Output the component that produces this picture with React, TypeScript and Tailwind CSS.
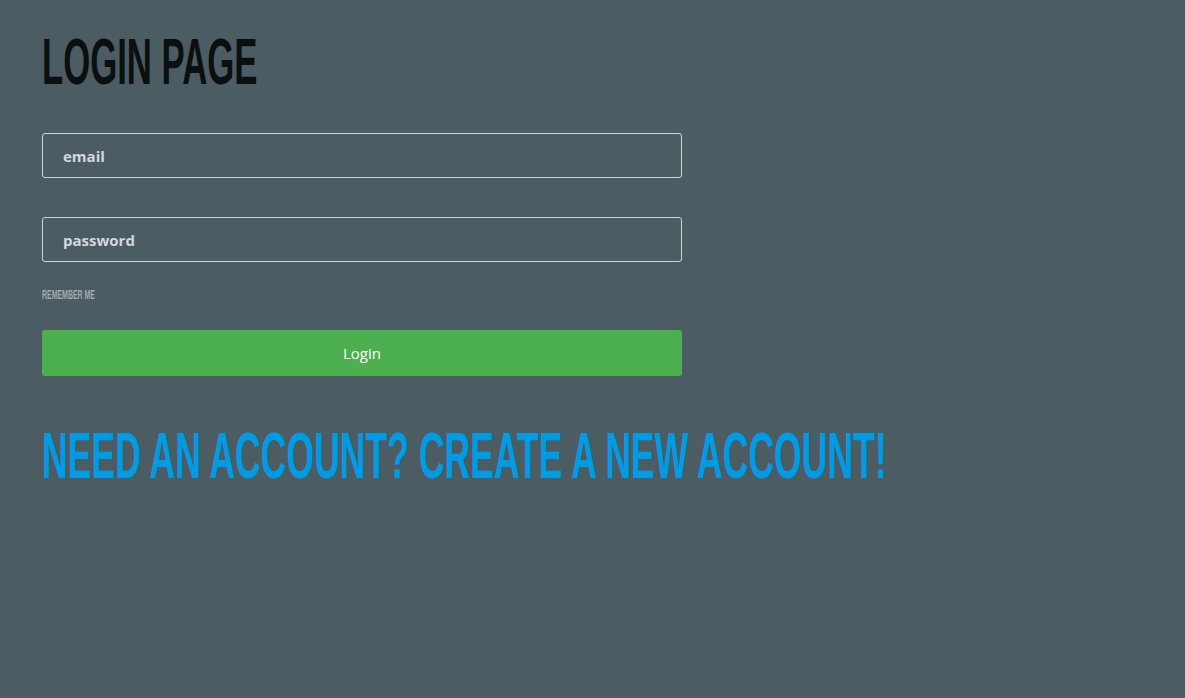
import { useState } from 'react';

const condensed = 'font-["Liberation_Sans",Arial,sans-serif] font-bold block w-max origin-left whitespace-nowrap';

export default function App() {
  const [email, setEmail] = useState('');
  const [password, setPassword] = useState('');

  return (
    <div className="min-h-[698px] w-full overflow-hidden bg-[#4b5c63] px-[42px] pt-[29px]">
      <h1 className={`${condensed} text-[65px] leading-none text-[#0c0f10] scale-x-[0.534]`}>
        LOGIN PAGE
      </h1>

      <form onSubmit={(e) => e.preventDefault()} className="flex w-[640px] flex-col">
        <input
          type="text"
          placeholder="email"
          value={email}
          onChange={(e) => setEmail(e.target.value)}
          className="mt-[39px] h-[45px] w-full rounded-[3px] border border-[#d2d4d6] bg-transparent px-[20px] font-['Open_Sans',sans-serif] text-[15px] font-bold text-[#d3d8dc] placeholder:text-[#d3d8dc] outline-none"
        />
        <input
          type="password"
          placeholder="password"
          value={password}
          onChange={(e) => setPassword(e.target.value)}
          className="mt-[39px] h-[45px] w-full rounded-[3px] border border-[#d2d4d6] bg-transparent px-[20px] font-['Open_Sans',sans-serif] text-[15px] font-bold text-[#d3d8dc] placeholder:text-[#d3d8dc] outline-none"
        />
        <div className="mt-[27px] flex h-[12px]">
          <span className={`${condensed} text-[12px] leading-none text-[#a3abb0] scale-x-[0.58]`}>
            REMEMBER ME
          </span>
        </div>
        <button
          type="submit"
          className="mt-[29px] h-[46px] w-full cursor-pointer rounded-[3px] bg-[#4caf50] font-['Open_Sans',sans-serif] text-[15px] text-white"
        >
          Login
        </button>
      </form>

      <h2 className={`${condensed} mt-[48px] text-[64px] leading-none text-[#009be5] scale-x-[0.556]`}>
        NEED AN ACCOUNT? CREATE A NEW ACCOUNT!
      </h2>
    </div>
  );
}
